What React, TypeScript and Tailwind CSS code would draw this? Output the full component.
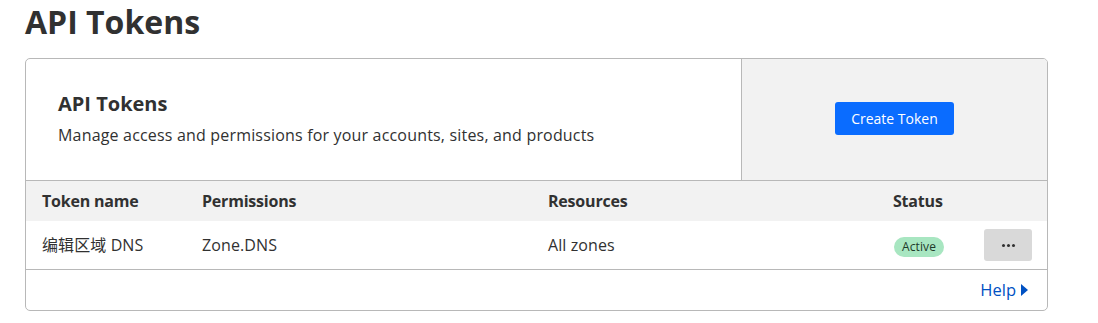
import React from "react";

const font = { fontFamily: '"Open Sans", "Noto Sans CJK SC", sans-serif' };

type Token = {
  name: string;
  permissions: string;
  resources: string;
  status: string;
};

const tokens: Token[] = [
  { name: "编辑区域 DNS", permissions: "Zone.DNS", resources: "All zones", status: "Active" },
];

export default function App() {
  return (
    <div className="min-h-screen bg-white text-[#313131] pl-[25px] pr-[50px]" style={font}>
      <h1 className="text-[32px] font-bold leading-[44px] mb-[14px]">API Tokens</h1>

      <div className="border border-[#b8b8b8] rounded-[5px] overflow-hidden">
        {/* header area */}
        <div className="flex h-[122px] border-b border-[#b8b8b8]">
          <div className="flex-1 flex flex-col justify-center pl-[32px]">
            <h2 className="text-[20px] font-bold leading-6">API Tokens</h2>
            <p className="text-[16px] leading-6 mt-[7px] tracking-[0.18px]">
              Manage access and permissions for your accounts, sites, and products
            </p>
          </div>
          <div className="w-[306px] bg-[#f2f2f2] border-l border-[#b8b8b8] flex items-center justify-center">
            <button className="bg-[#0a6cff] text-white text-[14px] rounded-[3px] h-[33px] px-[16px] mt-[-2px]">
              Create Token
            </button>
          </div>
        </div>

        {/* table */}
        <div className="grid grid-cols-[160px_346px_345px_91px_1fr] px-[16px] bg-[#f2f2f2] h-[40px] items-center text-[16px] font-bold tracking-[-0.2px]">
          <div>Token name</div>
          <div>Permissions</div>
          <div>Resources</div>
          <div>Status</div>
          <div />
        </div>
        {tokens.map((t) => (
          <div
            key={t.name}
            className="grid grid-cols-[160px_346px_345px_91px_1fr] px-[16px] h-[49px] items-center text-[16px] border-b border-[#b8b8b8] tracking-[0.1px]"
          >
            <div>{t.name}</div>
            <div>{t.permissions}</div>
            <div>{t.resources}</div>
            <div>
              <span className="inline-block bg-[#a8e6c1] text-[#1e3a2a] text-[12px] leading-[20px] px-[8px] rounded-full ml-[1px]">
                {t.status}
              </span>
            </div>
            <div>
              <button className="w-[48px] h-[32px] bg-[#d9d9d9] rounded-[3px] flex items-center justify-center gap-[2px]">
                <span className="w-[3px] h-[3px] rounded-full bg-[#313131]" />
                <span className="w-[3px] h-[3px] rounded-full bg-[#313131]" />
                <span className="w-[3px] h-[3px] rounded-full bg-[#313131]" />
              </button>
            </div>
          </div>
        ))}

        {/* footer */}
        <div className="h-[40px] flex items-center justify-end pr-[19px]">
          <a className="text-[#0051c3] text-[16.5px] flex items-center gap-[5px]" href="#">
            Help
            <svg width="7" height="12" viewBox="0 0 7 12">
              <path d="M0 0 L7 6 L0 12 Z" fill="#0051c3" />
            </svg>
          </a>
        </div>
      </div>
    </div>
  );
}
